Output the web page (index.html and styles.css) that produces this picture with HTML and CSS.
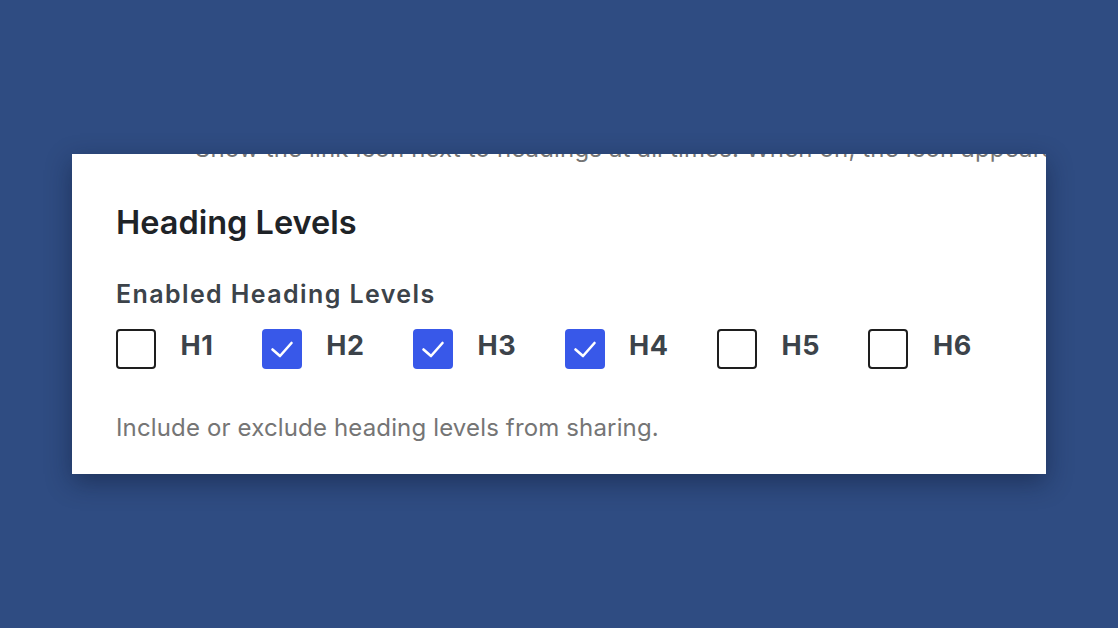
FILE: index.html
```html
<!DOCTYPE html>
<html lang="en">
<head>
    <meta charset="UTF-8">
    <meta name="viewport" content="width=device-width, initial-scale=1.0">
    <title>Heading Levels</title>
    <link rel="stylesheet" href="styles.css">
</head>
<body>
    <div class="panel">
        <p class="prev-help">Show the link icon next to headings at all times. When on, the icon appears beside every heading.</p>
        <h2 class="section-title">Heading Levels</h2>
        <div class="field">
            <div class="field-label">Enabled Heading Levels</div>
            <div class="levels">
                <label class="level">
                    <span class="box"></span>
                    <span class="level-name">H1</span>
                </label>
                <label class="level">
                    <span class="box checked">
                        <svg viewBox="0 0 40 40" width="40" height="40"><polyline points="10.5,20.5 18,27 29.5,14" /></svg>
                    </span>
                    <span class="level-name">H2</span>
                </label>
                <label class="level">
                    <span class="box checked">
                        <svg viewBox="0 0 40 40" width="40" height="40"><polyline points="10.5,20.5 18,27 29.5,14" /></svg>
                    </span>
                    <span class="level-name">H3</span>
                </label>
                <label class="level">
                    <span class="box checked">
                        <svg viewBox="0 0 40 40" width="40" height="40"><polyline points="10.5,20.5 18,27 29.5,14" /></svg>
                    </span>
                    <span class="level-name">H4</span>
                </label>
                <label class="level">
                    <span class="box"></span>
                    <span class="level-name">H5</span>
                </label>
                <label class="level">
                    <span class="box"></span>
                    <span class="level-name">H6</span>
                </label>
            </div>
        </div>
        <p class="help">Include or exclude heading levels from sharing.</p>
    </div>
</body>
</html>
```

FILE: styles.css
```css
body {
    margin: 0;
    padding: 154px 0 0 72px;
    background: #2f4c82;
    font-family: Inter, 'Noto Sans', sans-serif;
    height: 100vh;
    box-sizing: border-box;
    overflow: hidden;
}
.panel {
    width: 974px;
    height: 320px;
    background: #fff;
    box-shadow: 0 8px 24px rgba(10, 20, 45, 0.45);
    padding-left: 44px;
    box-sizing: border-box;
    overflow: hidden;
}
/* tail of the previous option's help text, scrolled under the top edge */
.prev-help {
    margin: -20px 0 0 79px;
    font-size: 24px;
    line-height: 30px;
    letter-spacing: 0.15px;
    color: #757575;
    white-space: nowrap;
}
.section-title {
    margin: 39px 0 0;
    font-size: 32.5px;
    line-height: 40px;
    font-weight: 600;
    color: #1e2327;
}
.field-label {
    margin-top: 36px;
    font-size: 25px;
    line-height: 30px;
    font-weight: 600;
    letter-spacing: 1.4px;
    color: #3c434a;
}
.levels {
    display: flex;
    gap: 48.5px;
    margin-top: 20px;
}
.level {
    display: flex;
    align-items: center;
    gap: 24.5px;
    height: 40px;
}
.box {
    width: 40px;
    height: 40px;
    border: 2px solid #1e1e1e;
    border-radius: 4px;
    box-sizing: border-box;
    display: flex;
    align-items: center;
    justify-content: center;
}
.box.checked {
    background: #3858e9;
    border: none;
}
.box svg polyline {
    fill: none;
    stroke: #fff;
    stroke-width: 2.6;
    stroke-linecap: round;
    stroke-linejoin: round;
}
.level-name {
    font-size: 27px;
    font-weight: 700;
    letter-spacing: 0.5px;
    color: #3c434a;
    margin-bottom: 8px;
}
.help {
    margin: 44px 0 0;
    font-size: 24px;
    line-height: 30px;
    letter-spacing: 0.15px;
    color: #757575;
}
```
